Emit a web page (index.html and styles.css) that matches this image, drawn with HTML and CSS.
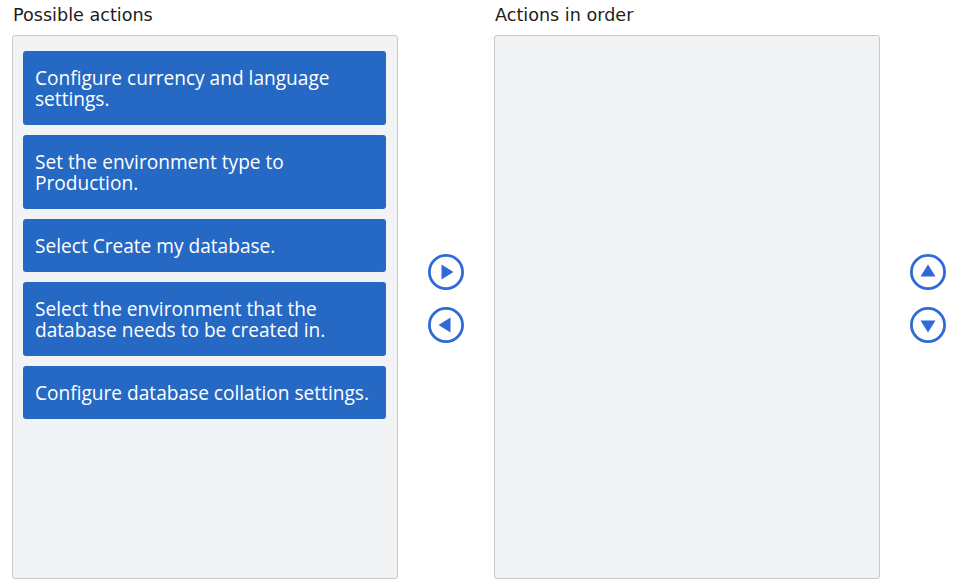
FILE: index.html
```html
<!DOCTYPE html>
<html lang="en">

<head>
    <meta charset="UTF-8">
    <title>Actions</title>
    <link rel="stylesheet" href="styles.css">
</head>

<body>
    <div class="board">
        <div class="column">
            <div class="column-title">Possible actions</div>
            <div class="list">
                <div class="item">Configure currency and language settings.</div>
                <div class="item">Set the environment type to Production.</div>
                <div class="item">Select Create my database.</div>
                <div class="item">Select the environment that the database needs to be created in.</div>
                <div class="item">Configure database collation settings.</div>
            </div>
        </div>
        <div class="controls">
            <a href="javascript:;" class="ctrl">
                <svg width="38" height="38" viewBox="0 0 38 38"><circle cx="19" cy="19" r="16.6" fill="none" stroke="#2f6ad6" stroke-width="2.8"/><path d="M14.5 11.5 L26.5 19 L14.5 26.5 Z" fill="#2f6ad6"/></svg>
            </a>
            <a href="javascript:;" class="ctrl">
                <svg width="38" height="38" viewBox="0 0 38 38"><circle cx="19" cy="19" r="16.6" fill="none" stroke="#2f6ad6" stroke-width="2.8"/><path d="M23.5 11.5 L11.5 19 L23.5 26.5 Z" fill="#2f6ad6"/></svg>
            </a>
        </div>
        <div class="column">
            <div class="column-title">Actions in order</div>
            <div class="list"></div>
        </div>
        <div class="controls">
            <a href="javascript:;" class="ctrl">
                <svg width="38" height="38" viewBox="0 0 38 38"><circle cx="19" cy="19" r="16.6" fill="none" stroke="#2f6ad6" stroke-width="2.8"/><path d="M11.5 23.5 L19 11.5 L26.5 23.5 Z" fill="#2f6ad6"/></svg>
            </a>
            <a href="javascript:;" class="ctrl">
                <svg width="38" height="38" viewBox="0 0 38 38"><circle cx="19" cy="19" r="16.6" fill="none" stroke="#2f6ad6" stroke-width="2.8"/><path d="M11.5 14.5 L19 26.5 L26.5 14.5 Z" fill="#2f6ad6"/></svg>
            </a>
        </div>
    </div>
</body>

</html>
```

FILE: styles.css
```css
html,
body {
    margin: 0;
    height: 100%;
    background-color: #fff;
    overflow: hidden;
}

body {
    font-family: "DejaVu Sans", Verdana, sans-serif;
    color: #1d1d1d;
}

.board {
    display: flex;
    padding: 0 0 0 12px;
}

.column {
    display: flex;
    flex-direction: column;
    flex-shrink: 0;
    width: 386px;
}

.column-title {
    font-size: 17.6px;
    height: 35px;
    line-height: 31px;
    padding-left: 1px;
}

.list {
    height: 544px;
    box-sizing: border-box;
    border: 1px solid #c8c8c8;
    border-radius: 3px;
    background-color: #f2f3f5;
    padding: 15px 11px 0 10px;
    display: flex;
    flex-direction: column;
    gap: 10px;
}

.item {
    background-color: #2669c4;
    color: #fff;
    border-radius: 3px;
    padding: 17px 12px 15px 12px;
    font-family: "Open Sans", sans-serif;
    font-size: 19.1px;
    line-height: 21px;
}

.controls {
    width: 96px;
    flex-shrink: 0;
    display: flex;
    flex-direction: column;
    align-items: center;
    padding-top: 253px;
    gap: 15px;
}

.ctrl {
    display: block;
    width: 38px;
    height: 38px;
}
```
